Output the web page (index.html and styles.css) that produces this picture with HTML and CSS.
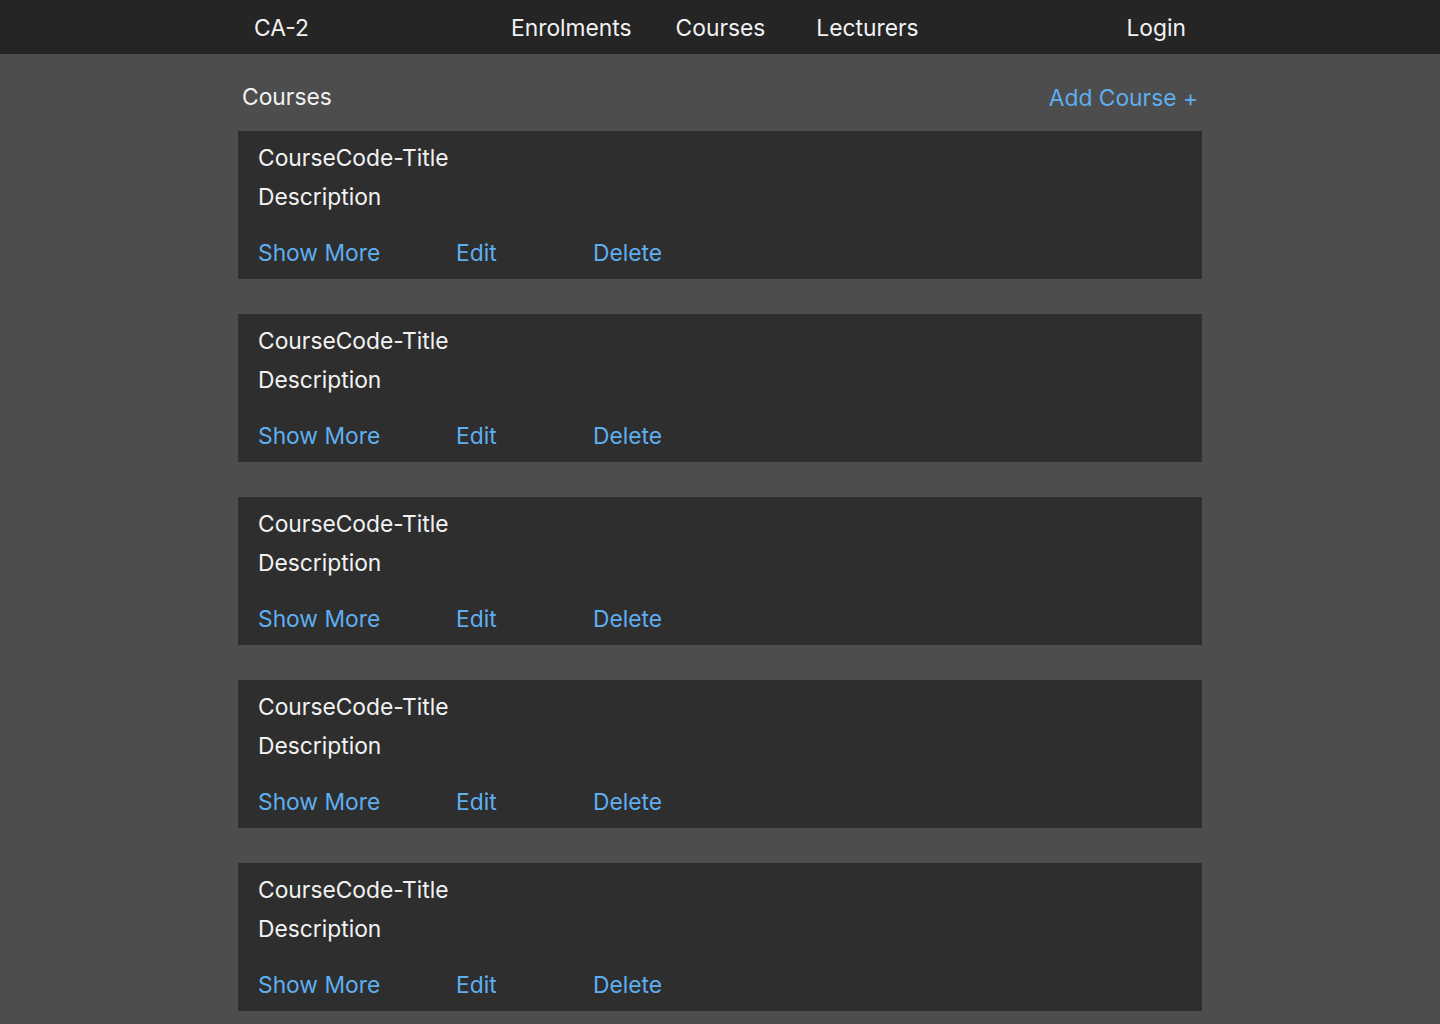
FILE: index.html
```html
<!DOCTYPE html>
<html lang="en">
<head>
<meta charset="utf-8">
<title>CA-2</title>
<link rel="stylesheet" href="styles.css">
</head>
<body>
<header class="topbar">
  <nav class="topbar-inner">
    <a class="brand" href="#">CA-2</a>
    <div class="nav-links">
      <a class="nav-link nav-enrol" href="#">Enrolments</a>
      <a class="nav-link nav-courses" href="#">Courses</a>
      <a class="nav-link nav-lect" href="#">Lecturers</a>
    </div>
    <a class="nav-link login" href="#">Login</a>
  </nav>
</header>
<main class="main">
  <div class="page-head">
    <h1 class="page-title">Courses</h1>
    <a class="link add" href="#">Add Course +</a>
  </div>
  <section class="card">
    <div class="card-title">CourseCode-Title</div>
    <div class="card-desc">Description</div>
    <div class="card-actions"><a class="link act-more" href="#">Show More</a><a class="link act-edit" href="#">Edit</a><a class="link act-del" href="#">Delete</a></div>
  </section>
  <section class="card">
    <div class="card-title">CourseCode-Title</div>
    <div class="card-desc">Description</div>
    <div class="card-actions"><a class="link act-more" href="#">Show More</a><a class="link act-edit" href="#">Edit</a><a class="link act-del" href="#">Delete</a></div>
  </section>
  <section class="card">
    <div class="card-title">CourseCode-Title</div>
    <div class="card-desc">Description</div>
    <div class="card-actions"><a class="link act-more" href="#">Show More</a><a class="link act-edit" href="#">Edit</a><a class="link act-del" href="#">Delete</a></div>
  </section>
  <section class="card">
    <div class="card-title">CourseCode-Title</div>
    <div class="card-desc">Description</div>
    <div class="card-actions"><a class="link act-more" href="#">Show More</a><a class="link act-edit" href="#">Edit</a><a class="link act-del" href="#">Delete</a></div>
  </section>
  <section class="card">
    <div class="card-title">CourseCode-Title</div>
    <div class="card-desc">Description</div>
    <div class="card-actions"><a class="link act-more" href="#">Show More</a><a class="link act-edit" href="#">Edit</a><a class="link act-del" href="#">Delete</a></div>
  </section>
</main>
</body>
</html>
```
FILE: styles.css
```css
* { box-sizing: border-box; }
html, body { margin: 0; padding: 0; }
body {
  background: #4d4d4d;
  color: #f2f2f2;
  font-family: Inter, "Noto Sans", sans-serif;
  font-size: 22.8px;
  overflow: hidden;
}
a { text-decoration: none; color: inherit; }

.topbar {
  background: #252525;
  height: 54px;
}
.topbar-inner {
  width: 964px;
  margin: 0 auto;
  height: 54px;
  padding: 0 16px;
  display: flex;
  align-items: center;
}
.brand { color: #f2f2f2; width: 257px; }
.nav-links { display: flex; flex: 1; }
.nav-link { color: #f2f2f2; }
.nav-courses { margin-left: 44px; }
.nav-lect { margin-left: 51px; }

.main {
  width: 964px;
  margin: 0 auto;
  padding-top: 28px;
}
.page-head {
  display: flex;
  justify-content: space-between;
  align-items: center;
  padding: 0 4px;
  height: 30px;
  margin-bottom: 19px;
}
.page-title {
  margin: 0;
  font-size: 22.8px;
  font-weight: 400;
  line-height: 30px;
}
.link { color: #5eaef0; }

.card {
  background: #2e2e2e;
  height: 148px;
  padding: 12px 20px 0;
  margin-bottom: 35px;
}
.card-title, .card-desc { line-height: 30px; }
.card-desc { margin-top: 9px; }
.card-actions {
  display: flex;
  line-height: 30px;
  margin-top: 26px;
}
.act-more { width: 198px; }
.act-edit { width: 137px; }
```
